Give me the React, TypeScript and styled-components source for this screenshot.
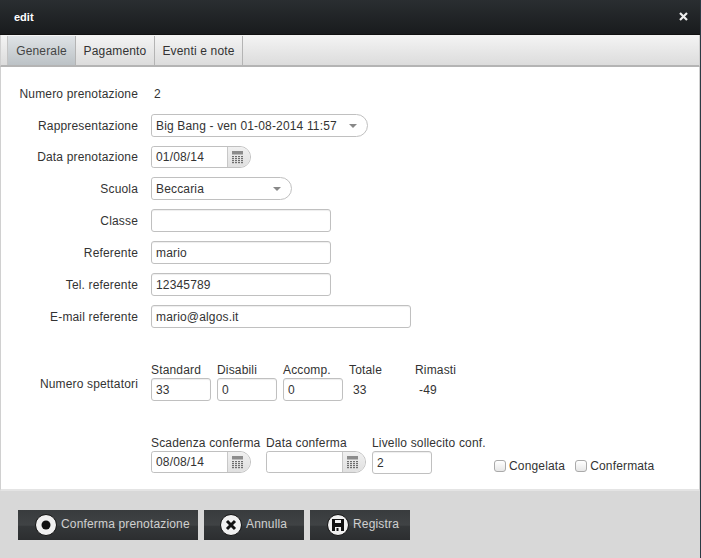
import React from "react";
import styled, { createGlobalStyle } from "styled-components";

const Global = createGlobalStyle`
  html, body { margin: 0; padding: 0; background: #fff; }
  body { font-family: "Liberation Sans", Arial, sans-serif; font-size: 12px; color: #333; letter-spacing: 0.16px; }
`;

const Window = styled.div`
  width: 701px;
  height: 558px;
  display: flex;
  flex-direction: column;
  overflow: hidden;
  background: #d8d8d8;
  border-right: 1px solid #2b3a44;
  box-sizing: border-box;
`;

const TitleBar = styled.div`
  height: 35px;
  flex: none;
  box-sizing: border-box;
  padding: 0 12px 1px 14px;
  display: flex;
  align-items: center;
  justify-content: space-between;
  color: #fff;
  font-weight: bold;
  font-size: 11px;
  letter-spacing: 0;
  background: linear-gradient(#2a2e31, #191b1d);
  border-bottom: 1px solid #111;
`;

const TabBar = styled.div`
  height: 32px;
  flex: none;
  box-sizing: border-box;
  padding: 1px 0 0 6px;
  display: flex;
  background: linear-gradient(#f4f4f4, #dcdcdc);
  border-bottom: 2px solid #b4b4b4;
  border-left: 1px solid #d0d0d0;
  border-right: 1px solid #d0d0d0;
`;

const Tab = styled.div<{ $active?: boolean; $width: number }>`
  width: ${(p) => p.$width}px;
  box-sizing: border-box;
  display: flex;
  align-items: center;
  justify-content: center;
  border-right: 1px solid #b4b4b4;
  color: ${(p) => (p.$active ? "#444" : "#333")};
  background: ${(p) => (p.$active ? "linear-gradient(#dfe3e6, #bcc2c6)" : "none")};
  ${(p) => (p.$active ? "border-left: 1px solid #c4c4c4;" : "")}
`;

const Content = styled.div`
  flex: 1;
  background: #fff;
  box-sizing: border-box;
  padding: 15px 0 0 0;
  border-left: 1px solid #d0d0d0;
  border-right: 1px solid #d0d0d0;
  border-bottom: 2px solid #e4e4e4;
  display: flex;
  flex-direction: column;
`;

const Row = styled.div<{ $mb?: number; $h?: number }>`
  display: flex;
  align-items: center;
  min-height: ${(p) => p.$h ?? 23}px;
  margin-bottom: ${(p) => p.$mb ?? 9}px;
`;

const Label = styled.div`
  width: 137px;
  flex: none;
  text-align: right;
  margin-right: 13px;
  white-space: nowrap;
`;

const Value = styled.div`
  padding-left: 3px;
`;

const Input = styled.div<{ $width: number }>`
  width: ${(p) => p.$width}px;
  height: 23px;
  flex: none;
  box-sizing: border-box;
  border: 1px solid #c0c0c0;
  border-radius: 3px;
  padding: 0 4px;
  display: flex;
  align-items: center;
  background: #fff;
  box-shadow: inset 0 1px 1px #eee;
`;

const Combo = styled.div<{ $width: number }>`
  width: ${(p) => p.$width}px;
  height: 23px;
  box-sizing: border-box;
  border: 1px solid #c0c0c0;
  border-radius: 3px 12px 12px 3px;
  padding: 0 10px 0 4px;
  display: flex;
  align-items: center;
  justify-content: space-between;
  background: #fff;
`;

const Arrow = styled.span`
  width: 0;
  height: 0;
  border-left: 4px solid transparent;
  border-right: 4px solid transparent;
  border-top: 4px solid #888;
`;

const DateBox = styled.div`
  width: 100px;
  height: 22px;
  flex: none;
  box-sizing: border-box;
  border: 1px solid #c0c0c0;
  border-radius: 3px 12px 12px 3px;
  display: flex;
  overflow: hidden;
  background: #fff;
`;

const DateText = styled.div`
  width: 75px;
  flex: none;
  box-sizing: border-box;
  padding-left: 4px;
  display: flex;
  align-items: center;
`;

const DateTrigger = styled.div`
  flex: 1;
  border-left: 1px solid #c8c8c8;
  background: linear-gradient(#f0f0f0, #e0e0e0);
  display: flex;
  align-items: center;
  padding-left: 4px;
`;

const Group = styled.div<{ $top: number }>`
  display: flex;
  margin-top: ${(p) => p.$top}px;
`;

const GroupLabel = styled(Label)`
  align-self: center;
  margin-top: 4px;
`;

const Cell = styled.div<{ $width: number; $ml?: number }>`
  width: ${(p) => p.$width}px;
  margin-left: ${(p) => p.$ml ?? 0}px;
  flex: none;
  display: flex;
  flex-direction: column;
  white-space: nowrap;
`;

const CellHead = styled.div`
  height: 15px;
  line-height: 14px;
`;

const CellValue = styled.div`
  height: 23px;
  display: flex;
  align-items: center;
  padding-left: 4px;
`;

const CheckWrap = styled.label<{ $ml: number }>`
  display: flex;
  align-items: center;
  margin-left: ${(p) => p.$ml}px;
  align-self: flex-start;
  height: 12px;
  margin-top: 24px;
`;

const Box = styled.span`
  width: 12px;
  height: 12px;
  box-sizing: border-box;
  border: 1px solid #aaa;
  border-radius: 3px;
  background: linear-gradient(#fff, #e6e6e6);
  margin-right: 3px;
  flex: none;
`;

const Footer = styled.div`
  flex: none;
  height: 67px;
  box-sizing: border-box;
  padding: 19px 0 0 18px;
  display: flex;
  gap: 6px;
  align-items: flex-start;
`;

const Btn = styled.div<{ $width: number; $pad: number }>`
  width: ${(p) => p.$width}px;
  height: 30px;
  box-sizing: border-box;
  padding-left: ${(p) => p.$pad}px;
  display: flex;
  align-items: center;
  gap: 4px;
  color: #d0d0d0;
  background: linear-gradient(#383b3d 0, #404345 50%, #343739 55%, #2c2e30 100%);
`;

const BtnText = styled.span`
  margin-top: -3px;
`;

const CalIcon = () => (
  <svg width="11" height="13" viewBox="0 0 11 13">
    <rect x="0" y="0" width="11" height="3.5" fill="#8c8c8c" />
    {[5, 7, 9, 11].map((y) =>
      [0, 3, 6, 9].map((x) => <rect key={`${x}-${y}`} x={x} y={y} width="2" height="1.2" fill="#6e6e6e" />)
    )}
  </svg>
);

const Close = () => (
  <svg width="9" height="9" viewBox="0 0 9 9">
    <path d="M1 1 L8 8 M8 1 L1 8" stroke="#eee" strokeWidth="2.2" />
  </svg>
);

const Round = ({ children }: { children: React.ReactNode }) => (
  <svg width="22" height="22" viewBox="0 0 22 22">
    <circle cx="11" cy="11" r="10.5" fill="#f0f0f0" stroke="#111" />
    {children}
  </svg>
);

const DateField = ({ value }: { value?: string }) => (
  <DateBox>
    <DateText>{value}</DateText>
    <DateTrigger>
      <CalIcon />
    </DateTrigger>
  </DateBox>
);

export default function App() {
  return (
    <>
      <Global />
      <Window>
        <TitleBar>
          <span>edit</span>
          <Close />
        </TitleBar>
        <TabBar>
          <Tab $active $width={69}>Generale</Tab>
          <Tab $width={79}>Pagamento</Tab>
          <Tab $width={88}>Eventi e note</Tab>
        </TabBar>
        <Content>
          <Row>
            <Label>Numero prenotazione</Label>
            <Value>2</Value>
          </Row>
          <Row>
            <Label>Rappresentazione</Label>
            <Combo $width={217}>
              Big Bang - ven 01-08-2014 11:57
              <Arrow />
            </Combo>
          </Row>
          <Row $h={22}>
            <Label>Data prenotazione</Label>
            <DateField value="01/08/14" />
          </Row>
          <Row>
            <Label>Scuola</Label>
            <Combo $width={141}>
              Beccaria
              <Arrow />
            </Combo>
          </Row>
          <Row>
            <Label>Classe</Label>
            <Input $width={180} />
          </Row>
          <Row>
            <Label>Referente</Label>
            <Input $width={180}>mario</Input>
          </Row>
          <Row>
            <Label>Tel. referente</Label>
            <Input $width={180}>12345789</Input>
          </Row>
          <Row $mb={0}>
            <Label>E-mail referente</Label>
            <Input $width={260}>mario@algos.it</Input>
          </Row>
          <Group $top={35}>
            <GroupLabel>Numero spettatori</GroupLabel>
            <Cell $width={60}>
              <CellHead>Standard</CellHead>
              <Input $width={60}>33</Input>
            </Cell>
            <Cell $width={60} $ml={6}>
              <CellHead>Disabili</CellHead>
              <Input $width={60}>0</Input>
            </Cell>
            <Cell $width={60} $ml={6}>
              <CellHead>Accomp.</CellHead>
              <Input $width={60}>0</Input>
            </Cell>
            <Cell $width={60} $ml={6}>
              <CellHead>Totale</CellHead>
              <CellValue>33</CellValue>
            </Cell>
            <Cell $width={60} $ml={6}>
              <CellHead>Rimasti</CellHead>
              <CellValue>-49</CellValue>
            </Cell>
          </Group>
          <Group $top={35}>
            <Label />
            <Cell $width={100}>
              <CellHead>Scadenza conferma</CellHead>
              <DateField value="08/08/14" />
            </Cell>
            <Cell $width={100} $ml={15}>
              <CellHead>Data conferma</CellHead>
              <DateField />
            </Cell>
            <Cell $width={60} $ml={6}>
              <CellHead>Livello sollecito conf.</CellHead>
              <Input $width={60}>2</Input>
            </Cell>
            <CheckWrap $ml={62}>
              <Box />
              Congelata
            </CheckWrap>
            <CheckWrap $ml={10}>
              <Box />
              Confermata
            </CheckWrap>
          </Group>
        </Content>
        <Footer>
          <Btn $width={180} $pad={17}>
            <Round>
              <circle cx="11" cy="11" r="4.5" fill="#111" />
            </Round>
            <BtnText>Conferma prenotazione</BtnText>
          </Btn>
          <Btn $width={100} $pad={16}>
            <Round>
              <path d="M7 7 L15 15 M15 7 L7 15" stroke="#111" strokeWidth="3" />
            </Round>
            <BtnText>Annulla</BtnText>
          </Btn>
          <Btn $width={100} $pad={17}>
            <Round>
              <path d="M5 5 H17 V17 H14 V13 H8 V17 H5 Z M8 6 V9 H14 V6 Z" fill="#111" fillRule="evenodd" />
              <rect x="9.5" y="14" width="2" height="3" fill="#111" />
            </Round>
            <BtnText>Registra</BtnText>
          </Btn>
        </Footer>
      </Window>
    </>
  );
}
